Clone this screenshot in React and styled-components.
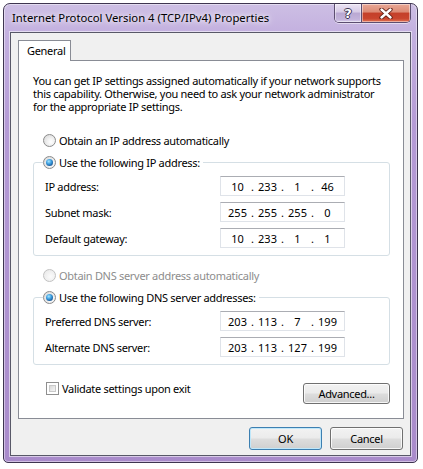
import React from "react";
import styled, { createGlobalStyle } from "styled-components";

const Global = createGlobalStyle`
  html, body { margin: 0; padding: 0; background: #ffffff; }
  body {
    font-family: "Noto Sans", "Open Sans", sans-serif;
    font-size: 11px;
    letter-spacing: -0.3px;
    color: #000;
  }
`;

const Window = styled.div`
  margin: 3px 0 0 3px;
  width: 415px;
  height: 460px;
  box-sizing: border-box;
  border: 1px solid #3e3550;
  border-radius: 7px 7px 5px 5px;
  background: linear-gradient(180deg, #cdbfe4 0%, #c3b0df 30px, #b59bd6 120px, #a98bcb 100%);
  box-shadow: inset 0 0 0 1px rgba(255, 255, 255, 0.45);
  padding: 0 6px 6px;
  display: flex;
  flex-direction: column;
`;

const TitleBar = styled.div`
  height: 28px;
  display: flex;
  align-items: flex-start;
`;

const Title = styled.div`
  margin: 6px 0 0 2px;
  line-height: 16px;
  font-size: 11.3px;
  letter-spacing: 0;
  color: #000;
  text-shadow: 0 0 8px rgba(255, 255, 255, 0.95), 0 0 4px rgba(255, 255, 255, 0.9);
  white-space: nowrap;
`;

const Caption = styled.div`
  margin-left: auto;
  display: flex;
  border: 1px solid #5c4e70;
  border-top: none;
  border-radius: 0 0 5px 5px;
  overflow: hidden;
  box-shadow: 0 1px 0 rgba(255, 255, 255, 0.5);
`;

const CapButton = styled.div`
  width: ${(p) => p.$w}px;
  height: 18px;
  display: flex;
  align-items: center;
  justify-content: center;
  background: ${(p) =>
    p.$close
      ? "linear-gradient(180deg, #e9a896 0%, #dc8a74 45%, #c4402a 50%, #c9452e 80%, #e07256 100%)"
      : "linear-gradient(180deg, #ece4f4 0%, #d6cae6 45%, #b9a8d2 50%, #c3b3db 85%, #d8cdea 100%)"};
  border-left: ${(p) => (p.$close ? "1px solid #5c4e70" : "none")};
  box-shadow: inset 0 0 0 1px rgba(255, 255, 255, 0.45);
`;

const HelpGlyph = styled.span`
  font-family: "DejaVu Sans", sans-serif;
  font-weight: bold;
  font-size: 13px;
  letter-spacing: 0;
  line-height: 1;
  color: #fff;
  text-shadow: -1px 0 #3c3450, 1px 0 #3c3450, 0 -1px #3c3450, 0 1px #3c3450;
`;

const Client = styled.div`
  width: 401px;
  height: 424px;
  box-sizing: border-box;
  border: 1px solid #585868;
  box-shadow: 0 0 0 1px rgba(255, 255, 255, 0.55);
  background: #f0f0f0;
  padding: 7px 6px 5px 7px;
  display: flex;
  flex-direction: column;
`;

const TabStrip = styled.div`
  display: flex;
  height: 20px;
`;

const Tab = styled.div`
  position: relative;
  z-index: 1;
  width: 53px;
  height: 21px;
  box-sizing: border-box;
  border: 1px solid #898c95;
  border-bottom: none;
  background: #fff;
  padding-left: 8px;
  display: flex;
  align-items: center;
  line-height: 16px;
`;

const Panel = styled.div`
  width: 386px;
  height: 359px;
  box-sizing: border-box;
  border: 1px solid #898c95;
  background: #fff;
  padding: 0 13px 0 14px;
  display: flex;
  flex-direction: column;
`;

const Intro = styled.p`
  margin: 13px 0 0;
  line-height: 13px;
  width: 356px;
`;

const OptionRow = styled.div`
  height: 16px;
  margin: ${(p) => p.$mt}px 0 0 10px;
  display: flex;
  align-items: center;
  gap: 3px;
  color: ${(p) => (p.$disabled ? "#8d8d8d" : "#000")};
  white-space: nowrap;
`;

const Radio = styled.span`
  flex: none;
  width: 13px;
  height: 13px;
  box-sizing: border-box;
  border-radius: 50%;
  border: 1px solid ${(p) => (p.$disabled ? "#c2c2c2" : "#8b8b8b")};
  background: ${(p) =>
    p.$disabled
      ? "radial-gradient(circle at 60% 60%, #fbfbfb 0%, #ececec 70%, #e0e0e0 100%)"
      : "radial-gradient(circle at 62% 62%, #ffffff 0%, #f2f2f2 35%, #d2d2d2 100%)"};
  display: flex;
  align-items: center;
  justify-content: center;
  &::after {
    content: "";
    display: ${(p) => (p.$checked ? "block" : "none")};
    width: 7px;
    height: 7px;
    border-radius: 50%;
    background: radial-gradient(circle at 40% 35%, #a6e6ff 0%, #3e9fe0 40%, #15508f 80%, #0c3566 100%);
  }
`;

const Group = styled.div`
  margin-top: 14px;
  border: 1px solid #d5dfe5;
  border-radius: 3px;
  padding: 0 0 7px 11px;
  display: flex;
  flex-direction: column;
`;

const Legend = styled.div`
  align-self: flex-start;
  height: 16px;
  margin: -9px 0 0 -2px;
  padding: 0 3px 0 0;
  background: #fff;
  display: flex;
  align-items: center;
  gap: 3px;
  white-space: nowrap;
`;

const Fields = styled.div`
  margin-top: 6px;
  display: flex;
  flex-direction: column;
  gap: 6px;
`;

const FieldRow = styled.div`
  display: grid;
  grid-template-columns: 175px 125px;
  align-items: center;
  height: 20px;
`;

const Label = styled.span`
  white-space: nowrap;
`;

const IpBox = styled.div`
  height: 20px;
  box-sizing: border-box;
  border: 1px solid #dfe3e9;
  border-top-color: #abadb3;
  background: #fff;
  padding-left: 4px;
  display: flex;
  align-items: center;
  letter-spacing: 0;
`;

const Octet = styled.span`
  width: 25px;
  text-align: center;
`;

const Dot = styled.span`
  width: 5px;
  text-align: center;
`;

const BottomRow = styled.div`
  margin-top: 15px;
  display: flex;
  align-items: flex-start;
  justify-content: space-between;
`;

const CheckRow = styled.label`
  height: 16px;
  margin-left: 13px;
  display: flex;
  align-items: center;
  gap: 3px;
`;

const Check = styled.span`
  width: 13px;
  height: 13px;
  box-sizing: border-box;
  border: 1px solid #8f8f8f;
  background: #fff;
  padding: 2px;
  &::after {
    content: "";
    display: block;
    width: 100%;
    height: 100%;
    background: linear-gradient(135deg, #d3d3d3 0%, #ececec 60%, #fafafa 100%);
    box-shadow: inset 0 0 0 1px #c9c9c9;
  }
`;

const Button = styled.button`
  width: ${(p) => p.$w}px;
  height: ${(p) => p.$h}px;
  margin-top: ${(p) => p.$mt || 0}px;
  box-sizing: border-box;
  padding: 0;
  font: inherit;
  letter-spacing: inherit;
  color: #000;
  border-radius: 3px;
  border: 1px solid ${(p) => (p.$default ? "#3c7fb1" : "#707070")};
  background: linear-gradient(180deg, #f2f2f2 0%, #ebebeb 48%, #dddddd 52%, #cfcfcf 100%);
  box-shadow: inset 0 0 0 1px ${(p) => (p.$default ? "#bfe7fa" : "rgba(255, 255, 255, 0.8)")};
  display: flex;
  align-items: center;
  justify-content: center;
`;

const ButtonRow = styled.div`
  margin: 8px 1px 0 0;
  display: flex;
  justify-content: flex-end;
  gap: 8px;
`;

function IpField({ value }) {
  const parts = value.split(".");
  return (
    <IpBox>
      {parts.map((p, i) => (
        <React.Fragment key={i}>
          {i > 0 && <Dot>.</Dot>}
          <Octet>{p}</Octet>
        </React.Fragment>
      ))}
    </IpBox>
  );
}

function CloseGlyph() {
  return (
    <svg width="14" height="11" viewBox="0 0 14 11">
      <path d="M2.5 1.5 L11.5 9.5 M11.5 1.5 L2.5 9.5" stroke="#5a1a10" strokeWidth="4.2" strokeLinecap="round" />
      <path d="M2.5 1.5 L11.5 9.5 M11.5 1.5 L2.5 9.5" stroke="#ffffff" strokeWidth="2.4" strokeLinecap="round" />
    </svg>
  );
}

const ipRows = [
  ["IP address:", "10.233.1.46"],
  ["Subnet mask:", "255.255.255.0"],
  ["Default gateway:", "10.233.1.1"],
];

const dnsRows = [
  ["Preferred DNS server:", "203.113.7.199"],
  ["Alternate DNS server:", "203.113.127.199"],
];

export default function App() {
  return (
    <>
      <Global />
      <Window>
        <TitleBar>
          <Title>Internet Protocol Version 4 (TCP/IPv4) Properties</Title>
          <Caption>
            <CapButton $w={26}>
              <HelpGlyph>?</HelpGlyph>
            </CapButton>
            <CapButton $w={48} $close>
              <CloseGlyph />
            </CapButton>
          </Caption>
        </TitleBar>
        <Client>
          <TabStrip>
            <Tab>General</Tab>
          </TabStrip>
          <Panel>
            <Intro>
              You can get IP settings assigned automatically if your network supports
              this capability. Otherwise, you need to ask your network administrator
              for the appropriate IP settings.
            </Intro>
            <OptionRow $mt={19}>
              <Radio />
              Obtain an IP address automatically
            </OptionRow>
            <Group>
              <Legend>
                <Radio $checked />
                Use the following IP address:
              </Legend>
              <Fields>
                {ipRows.map(([l, v]) => (
                  <FieldRow key={l}>
                    <Label>{l}</Label>
                    <IpField value={v} />
                  </FieldRow>
                ))}
              </Fields>
            </Group>
            <OptionRow $mt={11} $disabled>
              <Radio $disabled />
              Obtain DNS server address automatically
            </OptionRow>
            <Group>
              <Legend>
                <Radio $checked />
                Use the following DNS server addresses:
              </Legend>
              <Fields>
                {dnsRows.map(([l, v]) => (
                  <FieldRow key={l}>
                    <Label>{l}</Label>
                    <IpField value={v} />
                  </FieldRow>
                ))}
              </Fields>
            </Group>
            <BottomRow>
              <CheckRow>
                <Check />
                Validate settings upon exit
              </CheckRow>
              <Button $w={87} $h={21} $mt={3}>
                Advanced...
              </Button>
            </BottomRow>
          </Panel>
          <ButtonRow>
            <Button $w={73} $h={23} $default>
              OK
            </Button>
            <Button $w={73} $h={23}>
              Cancel
            </Button>
          </ButtonRow>
        </Client>
      </Window>
    </>
  );
}
